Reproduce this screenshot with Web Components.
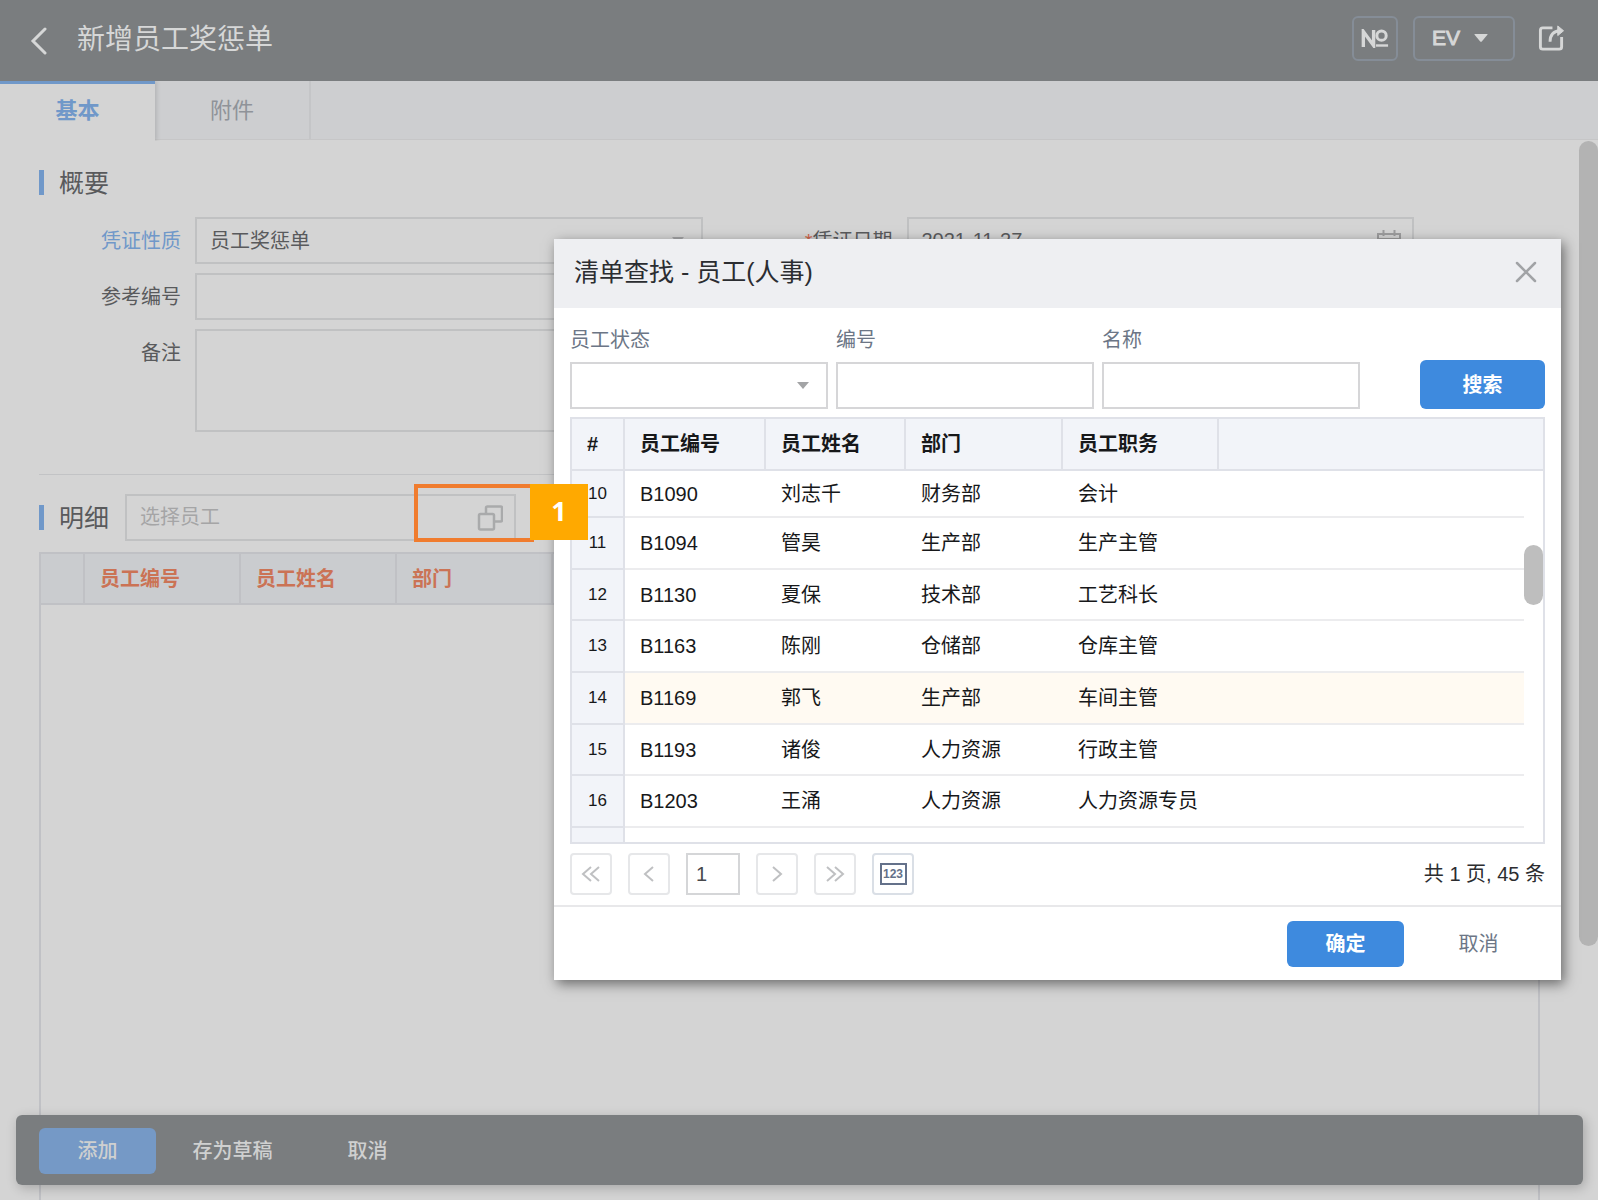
<!DOCTYPE html>
<html lang="zh-CN">
<head>
<meta charset="utf-8">
<title>新增员工奖惩单</title>
<style>
  html, body { margin: 0; height: 100%; }
  body {
    display: flex; flex-direction: column; overflow: hidden; position: relative;
    background: #d4d4d4; color: #595a5c;
    font: 20px/28px "Liberation Sans", "Noto Sans CJK SC", sans-serif;
  }
  main { flex: 1; min-height: 0; display: flex; flex-direction: column; padding: 25px 58px 0 39px; box-sizing: border-box; }
  .form { display: grid; grid-template-columns: 1fr 1fr; row-gap: 9px; margin: 18px 117px 0 -39px; }
  .form [wide] { grid-column: 1; }
  hr { width: 100%; border: 0; border-top: 1px solid #c2c3c5; margin: 42px 0 19px; }
  .detail { display: flex; align-items: center; gap: 16px; margin-bottom: 11px; }
  detail-grid { flex: 1; }
</style>
</head>
<body>
<app-header heading="新增员工奖惩单"></app-header>
<tab-strip></tab-strip>
<main>
  <section-title>概要</section-title>
  <div class="form">
    <form-field label="凭证性质" kind="select" value="员工奖惩单" linked></form-field>
    <form-field label="凭证日期" kind="date" value="2021-11-27" required></form-field>
    <form-field label="参考编号" kind="text" wide></form-field>
    <form-field label="备注" kind="area" wide></form-field>
  </div>
  <hr>
  <div class="detail">
    <section-title>明细</section-title>
    <employee-picker></employee-picker>
  </div>
  <detail-grid></detail-grid>
</main>
<page-scrollbar></page-scrollbar>
<action-bar></action-bar>
<lookup-dialog heading="清单查找 - 员工(人事)"></lookup-dialog>
<callout-mark>1</callout-mark>

<script>
const base = `
  *, *::before, *::after { box-sizing: border-box; }
  button, input, select, textarea { font: inherit; color: inherit; margin: 0; padding: 0; border: 0; background: none; border-radius: 0; outline: 0; appearance: none; resize: none; }
  svg { display: block; }
`;
function define(name, render) {
  customElements.define(name, class extends HTMLElement {
    connectedCallback() {
      if (this.shadowRoot) return;
      const t = document.createElement('template');
      t.innerHTML = render(this);
      const root = this.attachShadow({ mode: 'open' });
      root.innerHTML = `<style>${base}</style>`;
      root.append(t.content.cloneNode(true));
    }
  });
}

define('app-header', el => `
  <style>
    :host { display: flex; align-items: center; height: 81px; padding: 0 33px 0 29px; background: #7a7d7f; color: #d6d7d7; box-sizing: border-box; flex: none; }
    h1 { flex: 1; margin: 0 0 2px 28px; font-size: 28px; line-height: 40px; font-weight: 400; }
    .tools { display: flex; align-items: center; gap: 15px; margin-bottom: 5px; }
    .box { height: 45px; border: 2px solid #858d97; border-radius: 6px; display: flex; align-items: center; justify-content: center; }
    .no { width: 46px; }
    .ev { width: 102px; gap: 14px; font-size: 21px; padding-right: 8px; -webkit-text-stroke: 1px; }
    .share { margin-left: 8px; }
  </style>
  <button aria-label="返回"><svg width="20" height="28" viewBox="0 0 20 28" fill="none" stroke="currentColor" stroke-width="3" stroke-linecap="round"><path d="M16 2 4 14l12 12"/></svg></button>
  <h1>${el.getAttribute('heading')}</h1>
  <div class="tools">
    <button class="box no" aria-label="编号"><svg width="28" height="19" viewBox="0 0 30 20" fill="none" stroke="currentColor"><path d="M2.500 19V2.500L13.500 17.500V1" stroke-width="3.600"/><ellipse cx="22" cy="7" rx="5" ry="5" stroke-width="3.200"/><path d="M16 17.500h13" stroke-width="2.600"/></svg></button>
    <button class="box ev">EV <svg width="14" height="8" viewBox="0 0 14 8" fill="currentColor"><path d="M1 0h12q1 0 .4.800L7.800 7.400q-.8.800-1.600 0L.6.800Q0 0 1 0z"/></svg></button>
    <button class="share" aria-label="分享"><svg width="27" height="28" viewBox="0 0 28 28" fill="none" stroke="currentColor" stroke-width="3" stroke-linejoin="round"><path d="M15 3.500H5Q2.500 3.500 2.500 6v17Q2.500 25.500 5 25.500h17q2.500 0 2.500-2.500V13"/><path d="M12.500 18Q12.500 7 23 6.500"/><path d="M20.500 1.500 26.500 6.500l-6 5z" fill="currentColor" stroke-width="1"/></svg></button>
  </div>`);

define('tab-strip', () => `
  <style>
    :host { display: flex; height: 59px; flex: none; background: #cdced0; border-bottom: 1px solid #c6c6c7; box-sizing: border-box; margin-bottom: 1px; }
    button { width: 156px; height: 58px; font-size: 22px; padding-top: 2px; color: #8f9399; border-right: 2px solid #c4c5c7; }
    button[aria-selected=true] { width: 155px; height: 60px; background: #d4d4d4; color: #7098c9; font-weight: 600; border-top: 3px solid #7098c9; border-right: 0; padding: 0 0 3px; box-shadow: 2px 0 4px rgba(0,0,0,.12); clip-path: inset(0 -6px 0 0); }
  </style>
  <button role="tab" aria-selected="true">基本</button><button role="tab">附件</button>`);

define('section-title', () => `
  <style>
    :host { display: flex; align-items: center; gap: 15px; height: 33px; font-size: 25px; }
    :host::before { content: ""; width: 5px; height: 25px; background: #7098c9; }
  </style>
  <slot></slot>`);

define('form-field', el => {
  const a = n => el.getAttribute(n) || '';
  const controls = {
    select: `<select id="c"><option>${a('value')}</option></select><svg class="arrow" width="12" height="7" viewBox="0 0 12 7"><path d="M0 0h12L6 7z" fill="#a3a4a6"/></svg>`,
    date: `<input id="c" value="${a('value')}"><svg width="24" height="22" viewBox="0 0 24 22" fill="none" stroke="#9c9c9d" stroke-width="2"><path d="M1 4h22v17H1zM1 9h22M6.500 0v6M17.500 0v6"/></svg>`,
    text: `<input id="c">`,
    area: `<textarea id="c"></textarea>`
  };
  return `
  <style>
    :host { display: flex; align-items: flex-start; gap: 14px; padding-right: 9px; }
    label { width: 181px; height: 47px; flex: none; text-align: right; line-height: 49px; }
    :host([linked]) label { color: #7098c9; }
    i { font-style: normal; color: #d0674c; }
    .ctl { flex: 1; height: 47px; border: 2px solid #c0c1c2; display: flex; align-items: center; }
    .ctl.area { height: 103px; }
    .ctl > :first-child { flex: 1; min-width: 0; height: 100%; padding-left: 13px; }
    svg { margin-right: 11px; }
    .arrow { margin-right: 17px; }
  </style>
  <label for="c">${el.hasAttribute('required') ? '<i>*</i>' : ''}${a('label')}</label>
  <div class="ctl ${a('kind')}">${controls[a('kind')]}</div>`;
});

define('employee-picker', () => `
  <style>
    :host { display: flex; align-items: center; width: 391px; height: 47px; border: 2px solid #c0c1c2; padding: 0 11px 0 13px; box-sizing: border-box; }
    input { flex: 1; min-width: 0; height: 100%; }
    input::placeholder { color: #a5a5a6; opacity: 1; }
  </style>
  <input aria-label="选择员工" placeholder="选择员工">
  <button aria-label="打开清单查找"><svg width="26" height="26" viewBox="0 0 26 26" fill="none" stroke="#a9aaab" stroke-width="2.500"><rect x="2" y="9" width="15" height="15.500" rx="1.500"/><path d="M9 8.500V3Q9 1.500 10.500 1.500h13Q25 1.500 25 3v12q0 1.500-1.500 1.500H18"/></svg></button>`);

define('detail-grid', () => `
  <style>
    :host { display: block; border: solid #c0c1c5; border-width: 2px 2px 0; }
    table { width: 100%; border-spacing: 0; table-layout: fixed; }
    th { height: 51px; padding: 0 0 0 15px; text-align: left; background: #cacccf; color: #cb7355; font-weight: 600; border: solid #c0c1c5; border-width: 0 2px 2px 0; }
    th:last-child { border-right: 0; }
  </style>
  <table>
    <colgroup><col style="width:44px"><col style="width:156px"><col style="width:156px"><col style="width:156px"><col></colgroup>
    <thead><tr><th></th><th>员工编号</th><th>员工姓名</th><th>部门</th><th></th></tr></thead>
  </table>`);

define('page-scrollbar', () => `
  <style>
    :host { position: absolute; top: 141px; right: 0; bottom: 0; width: 19px; }
    div { height: 76%; border-radius: 10px; background: #b3b3b3; }
  </style>
  <div></div>`);

define('action-bar', () => `
  <style>
    :host { position: absolute; left: 16px; right: 15px; bottom: 15px; height: 70px; display: flex; align-items: center; gap: 18px; padding: 1px 23px 0; box-sizing: border-box; border-radius: 6px; background: rgba(120,123,125,.98); color: #cfd0d0; box-shadow: 2px 3px 12px rgba(0,0,0,.22); }
    button { width: 117px; height: 46px; border-radius: 6px; font-weight: 500; }
    .primary { background: #7599c6; }
  </style>
  <button class="primary">添加</button><button>存为草稿</button><button>取消</button>`);

const employees = [
  [10, 'B1090', '刘志千', '财务部', '会计'],
  [11, 'B1094', '管昊', '生产部', '生产主管'],
  [12, 'B1130', '夏保', '技术部', '工艺科长'],
  [13, 'B1163', '陈刚', '仓储部', '仓库主管'],
  [14, 'B1169', '郭飞', '生产部', '车间主管'],
  [15, 'B1193', '诸俊', '人力资源', '行政主管'],
  [16, 'B1203', '王涌', '人力资源', '人力资源专员']
];

define('lookup-table', () => `
  <style>
    :host { display: block; position: relative; border: 2px solid #dfe1e8; color: #17181a; }
    table { width: 100%; border-spacing: 0; table-layout: fixed; }
    th, td { padding: 0 0 0 15px; text-align: left; white-space: nowrap; }
    th { height: 52px; font-weight: 600; background: #f2f4f9; border: solid #dfe1e8; border-width: 0 2px 2px 0; }
    th:nth-last-child(2), th:last-child { border-right: 0; }
    td { height: 52px; border-bottom: 2px solid #ececee; }
    tr:nth-child(3n) td { height: 51px; }
    tbody tr:first-child td { height: 47px; }
    td:first-child { padding: 0; text-align: center; font-size: 17px; background: #f2f4f9; border-right: 2px solid #dfe1e8; border-bottom-color: #dfe1e8; }
    td:last-child { border: 0; }
    tbody .next td { height: 14px; border-bottom: 0; }
    .current td:not(:first-child, :last-child) { background: #fffaf2; }
    .thumb { position: absolute; right: 0; top: 126px; width: 19px; height: 60px; border-radius: 10px; background: #bebebe; }
  </style>
  <table>
    <colgroup><col style="width:53px"><col style="width:141px"><col style="width:140px"><col style="width:157px"><col style="width:156px"><col><col style="width:19px"></colgroup>
    <thead><tr><th>#</th><th>员工编号</th><th>员工姓名</th><th>部门</th><th>员工职务</th><th></th><th></th></tr></thead>
    <tbody>
      ${employees.map(r => `<tr class="${r[0] === 14 ? 'current' : ''}">${r.map(c => `<td>${c}</td>`).join('')}<td></td><td></td></tr>`).join('')}
      <tr class="next"><td></td><td></td><td></td><td></td><td></td><td></td><td></td></tr>
    </tbody>
  </table>
  <div class="thumb"></div>`);

const chevron = d => `<svg width="20" height="18" viewBox="0 0 20 18" fill="none" stroke="currentColor" stroke-width="2"><path d="${d}"/></svg>`;
define('page-nav', () => `
  <style>
    :host { display: flex; align-items: center; gap: 16px; height: 42px; color: #2c2d30; }
    button { width: 42px; height: 42px; display: flex; align-items: center; justify-content: center; border: 2px solid #e6e7e9; border-radius: 4px; color: #bfc0c2; }
    input { width: 54px; height: 42px; border: 2px solid #d5d6d8; padding-left: 8px; color: #47484b; }
    .count { border-color: #dadfe6; color: #64718a; }
    span { flex: 1; text-align: right; }
    b { display: block; width: 27px; height: 22px; border: 2px solid; font: 700 12px/18px "Liberation Sans", sans-serif; text-align: center; }
  </style>
  <button aria-label="首页">${chevron('M10 2 2 9l8 7M18 2l-8 7 8 7')}</button>
  <button aria-label="上一页">${chevron('M14 2 6 9l8 7')}</button>
  <input aria-label="页码" value="1">
  <button aria-label="下一页">${chevron('M6 2l8 7-8 7')}</button>
  <button aria-label="末页">${chevron('M2 2l8 7-8 7M10 2l8 7-8 7')}</button>
  <button class="count" aria-label="计数"><b>123</b></button>
  <span>共 1 页, 45 条</span>`);

define('lookup-dialog', el => `
  <style>
    :host { position: absolute; top: 239px; left: 554px; right: 37px; background: #fff; box-shadow: 3px 4px 12px rgba(0,0,0,.5); color: #6c7686; }
    header { display: flex; align-items: center; justify-content: space-between; height: 69px; padding: 0 23px 4px 20px; background: #eeeff2; }
    h2 { margin: 0; font-size: 25px; line-height: 36px; font-weight: 400; color: #2b2d31; }
    form { display: flex; align-items: flex-end; gap: 8px; padding: 18px 16px 8px; }
    .f { width: 258px; display: flex; flex-direction: column; gap: 8px; position: relative; }
    .f :is(input, select) { height: 47px; border: 2px solid #d6d6d8; padding: 0 12px; }
    .f svg { position: absolute; right: 19px; bottom: 20px; }
    .search { margin-left: auto; width: 125px; height: 49px; }
    .primary { background: #3e8ade; color: #fff; border-radius: 6px; font-weight: 600; }
    lookup-table, page-nav { margin: 0 16px; }
    page-nav { margin-top: 9px; margin-bottom: 10px; }
    footer { display: flex; justify-content: flex-end; align-items: center; gap: 16px; height: 75px; padding: 0 24px 0 0; border-top: 2px solid #e8e8ea; }
    footer button { width: 117px; height: 46px; }
  </style>
  <header><h2>${el.getAttribute('heading')}</h2><button aria-label="关闭"><svg width="24" height="24" viewBox="0 0 24 24" fill="none" stroke="#a1a3a6" stroke-width="2.500" stroke-linecap="round"><path d="M3 3l18 18M21 3 3 21"/></svg></button></header>
  <form>
    <div class="f"><label for="st">员工状态</label><select id="st"><option></option></select><svg width="12" height="7" viewBox="0 0 12 7"><path d="M0 0h12L6 7z" fill="#a3a4a6"/></svg></div>
    <div class="f"><label for="no">编号</label><input id="no"></div>
    <div class="f"><label for="nm">名称</label><input id="nm"></div>
    <button type="button" class="search primary">搜索</button>
  </form>
  <lookup-table></lookup-table>
  <page-nav></page-nav>
  <footer><button class="primary">确定</button><button>取消</button></footer>`);

define('callout-mark', () => `
  <style>
    :host { position: absolute; left: 414px; top: 484px; display: flex; align-items: flex-start; }
    .frame { width: 120px; height: 58px; border: 4px solid #f07c2e; border-right: 0; margin-right: -4px; }
    .tag { width: 58px; height: 56px; background: #ffa900; color: #fff; font: 700 27px/54px "Noto Sans", sans-serif; text-align: center; }
  </style>
  <div class="frame"></div><div class="tag"><slot></slot></div>`);
</script>
</body>
</html>
